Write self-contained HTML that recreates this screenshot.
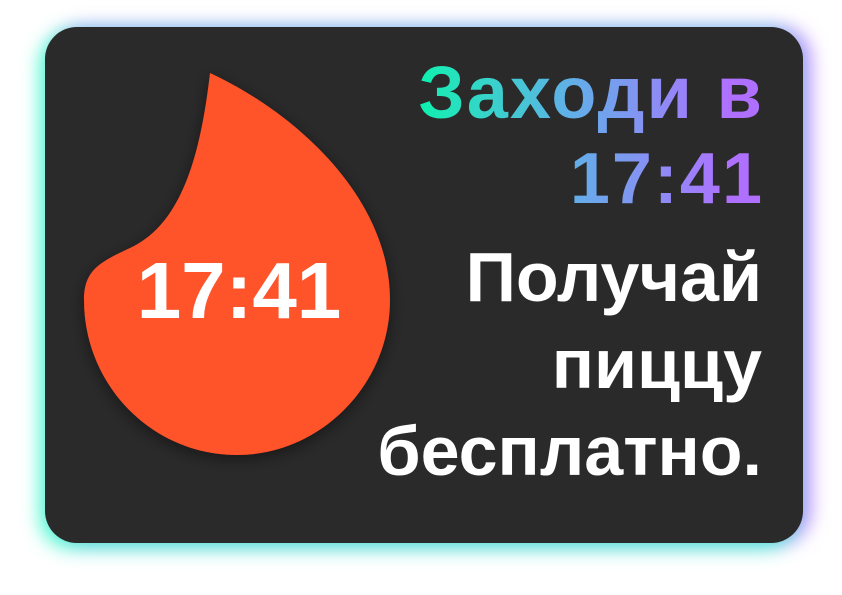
<!DOCTYPE html>
<html><head><meta charset="utf-8"><style>
html,body{margin:0;padding:0;background:#fff;width:842px;height:595px;overflow:hidden}
.card{position:absolute;left:45px;top:27px;width:758px;height:516px;border-radius:32px;background:#2a2a2a;
box-shadow:-6px 6px 18px rgba(40,255,200,.7),8px 0 18px rgba(170,100,255,.7),0 -4px 14px rgba(150,255,230,.35);}
svg{position:absolute;left:0;top:0}
.txt{position:absolute;left:360px;width:402px;top:0;text-align:right;font-family:"Liberation Sans",sans-serif;font-weight:bold;font-size:70px;line-height:87px;}
.g{background:linear-gradient(90deg,#00f5a8 12%,#1ee8b8 20%,#60b0e8 52%,#b070ff 92%);-webkit-background-clip:text;background-clip:text;color:transparent;position:absolute;left:0;width:402px;top:49px}
.l1{font-size:74px;letter-spacing:2px;margin-right:-2px}
.l2{font-size:72px;letter-spacing:2px;margin-right:-2px}
.w{color:#fff;position:absolute;left:0;width:402px;top:234px}
</style></head><body>
<div class="card"></div>
<svg width="842" height="595">
<defs><filter id="s" x="-20%" y="-20%" width="140%" height="140%"><feDropShadow dx="0" dy="4" stdDeviation="8" flood-color="#000" flood-opacity="0.45"/></filter></defs>
<path filter="url(#s)" fill="#ff522b" d="M210,73 C300,115 390,200 390,300 C390,385 320,455 237,455 C152,455 84,385 84,300 C84,270 100,262 130,248 C180,225 200,160 210,73 Z"/>
<text x="239" y="318" text-anchor="middle" fill="#fff" font-family="Liberation Sans, sans-serif" font-weight="bold" font-size="80">17:41</text>
</svg>
<div class="txt">
<div class="g"><div class="l1">Заходи в</div><div class="l2">17:41</div></div>
<div class="w">Получай<br>пиццу<br>бесплатно.</div>
</div>
</body></html>
